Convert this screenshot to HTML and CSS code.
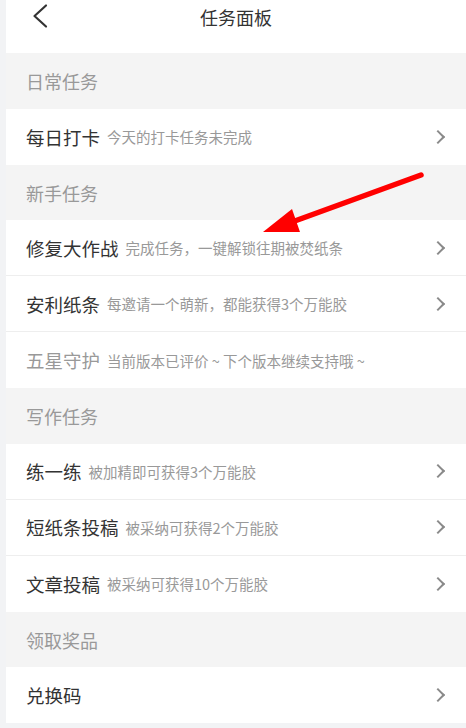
FILE: index.html
```html
<!DOCTYPE html>
<html lang="zh">
<head>
<meta charset="utf-8">
<title>任务面板</title>
<link rel="stylesheet" href="styles.css">
</head>
<body>
<div class="page">
  <header class="topbar">
    <svg class="back" width="20" height="30" viewBox="0 0 20 30"><path d="M16 5.5 L4.5 16 L16 26.5" fill="none" stroke="#333" stroke-width="2.2" stroke-linecap="round" stroke-linejoin="round"/></svg>
    <div class="title">任务面板</div>
  </header>

  <div class="section">日常任务</div>
  <div class="group">
    <div class="row"><span class="name">每日打卡</span><span class="desc">今天的打卡任务未完成</span><span class="chev"></span></div>
  </div>

  <div class="section">新手任务</div>
  <div class="group">
    <div class="row"><span class="name">修复大作战</span><span class="desc">完成任务，一键解锁往期被焚纸条</span><span class="chev"></span></div>
    <div class="row"><span class="name">安利纸条</span><span class="desc">每邀请一个萌新，都能获得3个万能胶</span><span class="chev"></span></div>
    <div class="row"><span class="name muted">五星守护</span><span class="desc">当前版本已评价 ~ 下个版本继续支持哦 ~</span></div>
  </div>

  <div class="section">写作任务</div>
  <div class="group">
    <div class="row"><span class="name">练一练</span><span class="desc">被加精即可获得3个万能胶</span><span class="chev"></span></div>
    <div class="row"><span class="name">短纸条投稿</span><span class="desc">被采纳可获得2个万能胶</span><span class="chev"></span></div>
    <div class="row"><span class="name">文章投稿</span><span class="desc">被采纳可获得10个万能胶</span><span class="chev"></span></div>
  </div>

  <div class="section">领取奖品</div>
  <div class="group">
    <div class="row"><span class="name">兑换码</span><span class="chev"></span></div>
  </div>
</div>

<svg class="annot" width="466" height="728" viewBox="0 0 466 728">
  <line x1="421" y1="175" x2="292" y2="222" stroke="#ff0000" stroke-width="5.5" stroke-linecap="round"/>
  <polygon points="263,232 292,209 300,232" fill="#ff0000"/>
</svg>
</body>
</html>
```

FILE: styles.css
```css
html, body {
  margin: 0;
  padding: 0;
}
body {
  background: #f2f3f5;
  font-family: "Noto Sans CJK SC", "Noto Sans", sans-serif;
  width: 466px;
  height: 728px;
  overflow: hidden;
  position: relative;
}
.page {
  margin-left: 6px;
  background: #f4f4f4;
}
.topbar {
  height: 53px;
  background: #fff;
  position: relative;
  display: flex;
  align-items: center;
  justify-content: center;
}
.back {
  position: absolute;
  left: 24px;
  top: 0;
}
.title {
  font-size: 18px;
  color: #333;
  margin-top: -20px;
}
.section {
  height: 55.5px;
  box-sizing: border-box;
  padding-left: 20px;
  padding-top: 1px;
  display: flex;
  align-items: center;
  font-size: 18px;
  color: #999;
}
.group {
  background: #fff;
}
.row {
  height: 56px;
  box-sizing: border-box;
  display: flex;
  align-items: center;
  padding: 0 19px 0 20px;
  border-bottom: 1px solid #eeeeee;
}
.row:last-child {
  border-bottom: none;
}
.name {
  font-size: 18.5px;
  color: #333;
  white-space: nowrap;
}
.name.muted {
  color: #999;
}
.desc {
  font-size: 14.5px;
  color: #999;
  margin-left: 7px;
  white-space: nowrap;
}
.chev {
  margin-left: auto;
  width: 10px;
  height: 10px;
  box-sizing: border-box;
  border-top: 2.5px solid #8a8a8a;
  border-right: 2.5px solid #8a8a8a;
  transform: rotate(45deg);
  margin-right: 4px;
}
.annot {
  position: absolute;
  left: 0;
  top: 0;
  pointer-events: none;
}
```
